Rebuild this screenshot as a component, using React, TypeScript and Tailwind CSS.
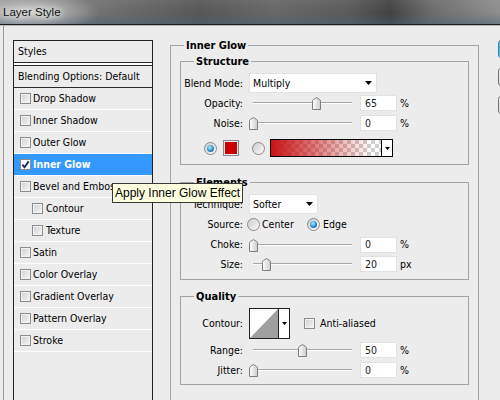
import clsx from "clsx";

const styleRows = [
  { name: "Drop Shadow" },
  { name: "Inner Shadow" },
  { name: "Outer Glow" },
  { name: "Inner Glow", on: true },
  { name: "Bevel and Emboss" },
  { name: "Contour", sub: true },
  { name: "Texture", sub: true },
  { name: "Satin" },
  { name: "Color Overlay" },
  { name: "Gradient Overlay" },
  { name: "Pattern Overlay" },
  { name: "Stroke" },
];

function Checkbox({ checked = false }: { checked?: boolean }) {
  return (
    <span
      className={clsx(
        "flex h-[11px] w-[11px] shrink-0 items-center justify-center border border-[#8c8c8c]",
        checked ? "bg-white" : "bg-[linear-gradient(135deg,#d0d0d0,#f7f7f7)] shadow-[inset_0_0_0_1px_#f3f3f3]"
      )}
    >
      {checked && (
        <svg width="9" height="9" viewBox="0 0 9 9">
          <path d="M1.4 4.6 L3.5 7.2 L7.7 1.4" fill="none" stroke="#1c2a66" strokeWidth="1.9" />
        </svg>
      )}
    </span>
  );
}

function Radio({ on = false }: { on?: boolean }) {
  return (
    <span className="flex h-[13px] w-[13px] shrink-0 items-center justify-center rounded-full border border-[#8a8a8a] bg-[linear-gradient(135deg,#cdcdcd,#fbfbfb)]">
      {on && (
        <span className="h-[7px] w-[7px] rounded-full bg-[radial-gradient(circle_at_40%_35%,#b4e8ff,#2b8fcb_55%,#0d4f80)]" />
      )}
    </span>
  );
}

function Arrow() {
  return (
    <svg width="7" height="4" viewBox="0 0 7 4">
      <path d="M0 0h7L3.5 4z" fill="#000" />
    </svg>
  );
}

function Thumb() {
  return (
    <svg width="9" height="13" viewBox="0 0 9 13">
      <defs>
        <linearGradient id="thumbGrad" x1="0" y1="0" x2="1" y2="0">
          <stop offset="0" stopColor="#ffffff" />
          <stop offset="1" stopColor="#cccccc" />
        </linearGradient>
      </defs>
      <path
        d="M0.5 12.5V4.2Q0.5 3 1.6 2.3L4.5 0.6L7.4 2.3Q8.5 3 8.5 4.2V12.5Z"
        fill="url(#thumbGrad)"
        stroke="#7d7d7d"
      />
    </svg>
  );
}

function Slider({ value }: { value: number }) {
  return (
    <div className="relative flex h-[20px] w-[106px] shrink-0 items-center pl-[4px]">
      <div className="h-[2px] w-[99px] border-t border-b border-t-[#a5a5a5] border-b-white" />
      <div className="absolute top-[4px] flex" style={{ left: Math.round(value * 97) }}>
        <Thumb />
      </div>
    </div>
  );
}

function Field({ label, value, unit = "%", slider, className }: { label: string; value: string; unit?: string; slider: number; className?: string }) {
  return (
    <div className={clsx("flex items-center", className ?? "h-[20px]")}>
      <span className="w-[62px] shrink-0 text-right">{label}</span>
      <div className="ml-[6px] flex items-center">
        <Slider value={slider} />
        <span className="ml-[5px] flex h-[16px] w-[37px] items-center border border-[#e2e2e2] bg-white pl-[4px] text-[#222]">{value}</span>
        <span className="ml-[3px]">{unit}</span>
      </div>
    </div>
  );
}

function Legend({ children }: { children: string }) {
  return <legend className="ml-[13px] px-[2px] text-[11px] font-bold leading-[13px]">{children}</legend>;
}

export default function App() {
  return (
    <div className="relative flex h-[400px] w-[500px] flex-col overflow-hidden bg-[#ececec] text-[10.5px] leading-[13px] text-black [font-family:'DejaVu_Sans_Condensed','Liberation_Sans',Arial,sans-serif]">
      {/* title bar */}
      <div className="flex h-[24px] shrink-0 items-center bg-[radial-gradient(ellipse_70px_20px_at_30px_12px,rgba(215,215,215,0.85),rgba(215,215,215,0)),linear-gradient(to_bottom,rgba(255,255,255,0.06)_0%,rgba(0,0,0,0)_55%,rgba(70,95,120,0.45)_100%),linear-gradient(to_right,#8c8c8c_0%,#6e6e6e_22%,#575757_40%,#676767_55%,#5a5a5a_70%,#424242_78%,#6a6a6a_86%,#8e8e8e_100%)] pl-[3px]">
        <span className="text-[11.5px] text-[#111] [font-family:'Liberation_Sans',Arial,sans-serif] [text-shadow:0_0_6px_#fff,0_0_10px_#fff]">
          Layer Style
        </span>
      </div>
      <div className="h-[1px] shrink-0 bg-[#1a1a1a]" />
      <div className="h-[1px] shrink-0 bg-[#b8b8b8]" />

      <div className="flex-1 pl-[3px]">
        <div className="flex h-full items-start border-l border-[#9a9a9a]">
          {/* styles list */}
          <div className="ml-[9px] mt-[14px] h-[400px] w-[140px] shrink-0 border border-[#222]">
            <div className="flex h-[21px] items-center pl-[4px]">Styles</div>
            <div className="h-[4px] border-y border-[#2a2a2a] bg-white" />
            <div className="flex h-[22px] items-center border-b border-[#2a2a2a] pl-[4px]">Blending Options: Default</div>
            {styleRows.map((r) => (
              <div
                key={r.name}
                className={clsx(
                  "flex h-[22px] items-center border-b border-white",
                  r.sub ? "pl-[18px]" : "pl-[6px]",
                  r.on && "bg-[#3399ff] font-bold text-white"
                )}
              >
                <Checkbox checked={r.on} />
                <span className={clsx("whitespace-nowrap", r.sub ? "ml-[3px]" : "ml-[2px]")}>{r.name}</span>
              </div>
            ))}
          </div>

          {/* inner glow settings */}
          <fieldset className="ml-[17px] mt-[13px] w-[309px] shrink-0 border border-[#a3a3a3] px-[9px] pb-[30px]">
            <legend className="ml-[4px] px-[2px] text-[11px] font-bold leading-[13px]">Inner Glow</legend>

            <fieldset className="mt-[3px] border border-[#a3a3a3] pb-[6px] pt-[5px]">
              <Legend>Structure</Legend>
              <div className="flex h-[20px] items-center">
                <span className="w-[62px] shrink-0 text-right">Blend Mode:</span>
                <div className="ml-[6px] flex h-[20px] w-[128px] items-center justify-between border border-[#e2e2e2] bg-white pl-[3px] pr-[4px]">
                  Multiply <Arrow />
                </div>
              </div>
              <Field label="Opacity:" value="65" slider={0.65} />
              <Field label="Noise:" value="0" slider={0} />
              <div className="mt-[5px] flex h-[20px] items-center pl-[23px]">
                <Radio on />
                <span className="ml-[6px] h-[16px] w-[16px] border border-[#8a8a8a] bg-[#cc0000] shadow-[inset_0_0_0_1px_#e8e8e8]" />
                <span className="ml-[13px] flex">
                  <Radio />
                </span>
                <div className="ml-[5px] flex h-[18px] w-[123px] border border-black">
                  <div className="flex-1 bg-[linear-gradient(to_right,#c81414,rgba(200,20,20,0)_92%),repeating-conic-gradient(#cfcfcf_0_25%,#ffffff_0_50%)] bg-[length:100%_100%,8px_8px]" />
                  <div className="flex w-[11px] items-center justify-center border-l border-black bg-white">
                    <svg width="5" height="3" viewBox="0 0 5 3">
                      <path d="M0 0h5L2.5 3z" fill="#000" />
                    </svg>
                  </div>
                </div>
              </div>
            </fieldset>

            <fieldset className="mt-[11px] border border-[#a3a3a3] pb-[5px] pt-[5px]">
              <Legend>Elements</Legend>
              <div className="flex h-[20px] items-center">
                <span className="w-[62px] shrink-0 text-right">Technique:</span>
                <div className="ml-[6px] flex h-[20px] w-[69px] items-center justify-between border border-[#e2e2e2] bg-white pl-[3px] pr-[4px]">
                  Softer <Arrow />
                </div>
              </div>
              <div className="flex h-[21px] items-center">
                <span className="w-[62px] shrink-0 text-right">Source:</span>
                <span className="ml-[4px] flex">
                  <Radio />
                </span>
                <span className="ml-[2px] w-[45px]">Center</span>
                <Radio on />
                <span className="ml-[3px]">Edge</span>
              </div>
              <Field label="Choke:" value="0" slider={0} className="h-[19px]" />
              <Field label="Size:" value="20" unit="px" slider={0.134} />
            </fieldset>

            <fieldset className="mt-[10px] border border-[#a3a3a3] pb-[4px] pt-[5px]">
              <Legend>Quality</Legend>
              <div className="flex h-[30px] items-center">
                <span className="w-[62px] shrink-0 text-right">Contour:</span>
                <div className="ml-[6px] flex h-[31px] w-[41px] border border-[#222] bg-white">
                  <svg width="28" height="29" viewBox="0 0 28 29" className="shrink-0">
                    <polygon points="0,29 28,0 28,29" fill="#a0a0a0" />
                  </svg>
                  <div className="flex flex-1 items-center justify-center border-l border-[#222]">
                    <svg width="5" height="3" viewBox="0 0 5 3">
                      <path d="M0 0h5L2.5 3z" fill="#000" />
                    </svg>
                  </div>
                </div>
                <span className="ml-[14px] flex">
                  <Checkbox />
                </span>
                <span className="ml-[5px]">Anti-aliased</span>
              </div>
              <Field label="Range:" value="50" slider={0.5} className="mt-[2px] h-[20px]" />
              <Field label="Jitter:" value="0" slider={0} />
            </fieldset>
          </fieldset>

          {/* dialog buttons, only their left edges show */}
          <div className="ml-[19px] mt-[14px] flex w-[80px] shrink-0 flex-col gap-[10px]">
            <div className="h-[18px] rounded-[3px] border border-[#3c7fb1] bg-[linear-gradient(#f2f2f2,#dcdcdc)] shadow-[inset_0_0_0_1px_#48c0f0]" />
            <div className="h-[18px] rounded-[3px] border border-[#707070] bg-[linear-gradient(#f2f2f2,#dcdcdc)]" />
            <div className="h-[18px] rounded-[3px] border border-[#707070] bg-[linear-gradient(#f2f2f2,#dcdcdc)]" />
          </div>
        </div>
      </div>

      {/* tooltip */}
      <div className="absolute left-[112px] top-[183px] flex h-[20px] items-center whitespace-nowrap border border-[#3b3b3b] bg-[#ffffe1] px-[2px] text-[12px] [font-family:'Liberation_Sans',Arial,sans-serif]">
        Apply Inner Glow Effect
      </div>
    </div>
  );
}
